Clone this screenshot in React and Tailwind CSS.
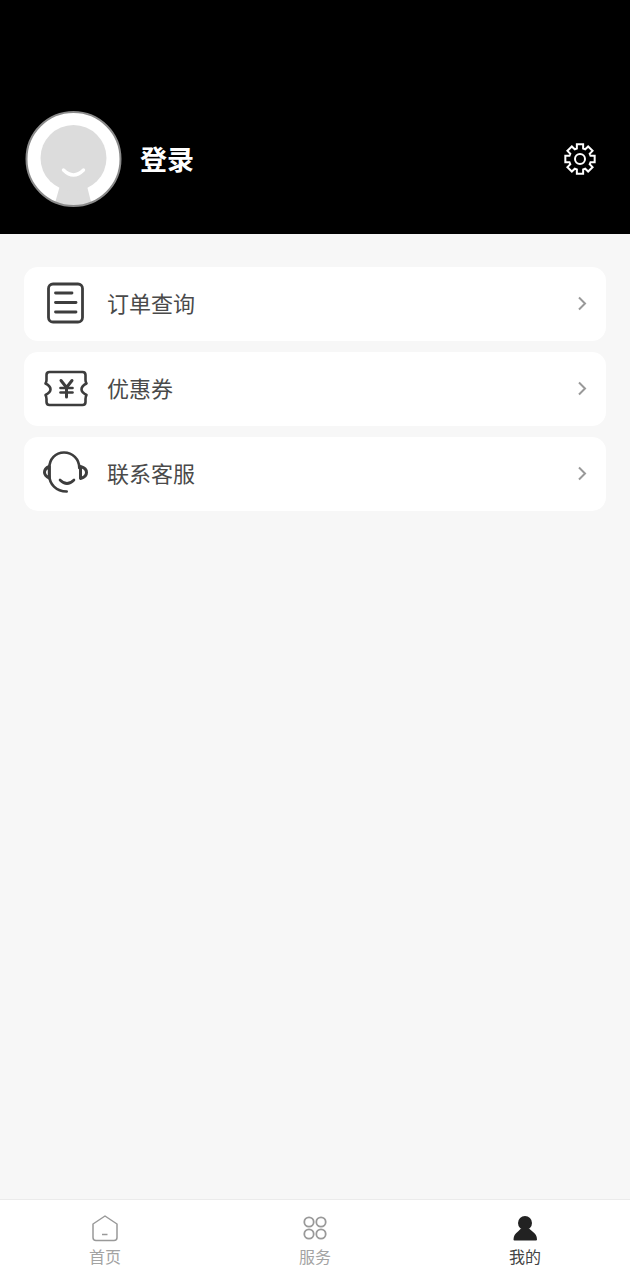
import React from "react";

function Avatar() {
  return (
    <svg width="98" height="98" viewBox="0 0 98 98" className="block shrink-0">
      <defs>
        <clipPath id="av"><circle cx="48.500" cy="49" r="47" /></clipPath>
      </defs>
      <circle cx="48.500" cy="49" r="47" fill="#fff" />
      <g clipPath="url(#av)">
        <path d="M36 72 L61 72 L68 100 L28 100 Z" fill="#dcdcdc" />
      </g>
      <circle cx="48.500" cy="48" r="33" fill="#dcdcdc" />
      <path d="M38.500 60 Q48.500 70 58.500 60" fill="none" stroke="#fff" strokeWidth="3.4" strokeLinecap="round" />
      <circle cx="48.500" cy="49" r="47" fill="none" stroke="#8a8a8a" strokeWidth="2" />
    </svg>
  );
}

function Gear() {
  const n = 8, ro = 15, ri = 11;
  let d = "";
  for (let i = 0; i < n; i++) {
    const a = (i * 2 * Math.PI) / n - Math.PI / 2;
    const pts = [
      [ri, a - 0.29],
      [ro, a - 0.21],
      [ro, a + 0.21],
      [ri, a + 0.29],
    ];
    pts.forEach(([r, t], j) => {
      const x = (16 + r * Math.cos(t)).toFixed(2);
      const y = (16 + r * Math.sin(t)).toFixed(2);
      d += (i === 0 && j === 0 ? "M" : "L") + x + " " + y + " ";
    });
  }
  d += "Z";
  return (
    <svg width="32" height="32" viewBox="0 0 32 32" fill="none" stroke="#fff" strokeWidth="2" strokeLinejoin="miter">
      <path d={d} />
      <circle cx="16" cy="16" r="5" />
    </svg>
  );
}

function OrderIcon() {
  return (
    <svg width="46" height="46" viewBox="0 0 46 46" fill="none" stroke="#3d3d3d" strokeWidth="2.8" strokeLinecap="round">
      <rect x="5.500" y="3" width="34" height="38" rx="4.5" />
      <path d="M12.500 12H29" />
      <path d="M12.500 21.500H33" />
      <path d="M12.500 31H33" />
    </svg>
  );
}

function CouponIcon() {
  return (
    <svg width="46" height="46" viewBox="0 0 46 46" fill="none" stroke="#3d3d3d" strokeWidth="2.6" strokeLinecap="round" strokeLinejoin="round">
      <path d="M7 6H39.500Q42.500 6 42.500 9V14Q42.500 16 43.500 17.500Q38.500 20 38.500 23.300Q38.500 26.500 43.500 29Q42.500 30.500 42.500 33V36Q42.500 39 39.500 39H6.500Q3.500 39 3.500 36V33Q3.500 30.500 2.500 29Q7.500 26.500 7.500 23.300Q7.500 20 2.500 17.500Q3.500 16 3.500 14V9Q3.500 6 6.500 6Z" />
      <path d="M18 14.500L23.500 21.500L29 14.500" strokeWidth="3" />
      <path d="M23.500 21.500V31" strokeWidth="3" />
      <path d="M17.500 22H29.500" />
      <path d="M17.500 26.500H29.500" />
    </svg>
  );
}

function ServiceIcon() {
  return (
    <svg width="46" height="46" viewBox="0 0 46 46" fill="none" stroke="#3d3d3d" strokeWidth="2.6" strokeLinecap="round" strokeLinejoin="round">
      <path d="M36.300 17C36.300 8 29.500 1.500 21 1.500C12.500 1.500 6.300 8 6.300 17V24C6.300 33 13 40.500 23.700 40.500" />
      <path d="M17 29Q24 36 31 29" />
      <path d="M6.300 15.500Q1.500 17.500 1.500 21.300Q1.500 25 6.300 27Z" strokeWidth="3" />
      <path d="M37.500 15.500Q43.500 17 43.500 21.500Q43.500 26 37.500 27.500Z" strokeWidth="3" />
    </svg>
  );
}

function Chevron() {
  return (
    <svg width="12" height="18" viewBox="0 0 12 18" fill="none" stroke="#999" strokeWidth="2">
      <path d="M3 2.500L9 8.500L3 14.500" />
    </svg>
  );
}

function HomeIcon() {
  return (
    <svg width="28" height="28" viewBox="0 0 28 28" fill="none" stroke="#999" strokeWidth="1.5" strokeLinejoin="round">
      <path d="M14 2L26 10V23.500Q26 26.500 23 26.500H5Q2 26.500 2 23.500V10Z" />
      <path d="M11 20.500H16.500" />
    </svg>
  );
}

function ServicesIcon() {
  return (
    <svg width="28" height="28" viewBox="0 0 28 28" fill="none" stroke="#999" strokeWidth="1.8">
      <circle cx="8" cy="8" r="4.700" />
      <circle cx="20" cy="8" r="4.700" />
      <circle cx="8" cy="20" r="4.700" />
      <circle cx="20" cy="20" r="4.700" />
    </svg>
  );
}

function MineIcon() {
  return (
    <svg width="28" height="28" viewBox="0 0 28 28" fill="#222">
      <circle cx="14" cy="9" r="7" />
      <path d="M10 14.500H18L21.500 17.500Q26 20.500 26 25.500Q26 26.500 25 26.500H3.500Q2.500 26.500 2.500 25.500Q2.500 20.500 7 17.500Z" />
    </svg>
  );
}

const rows = [
  { label: "订单查询", Icon: OrderIcon },
  { label: "优惠券", Icon: CouponIcon },
  { label: "联系客服", Icon: ServiceIcon },
];

const tabs = [
  { label: "首页", Icon: HomeIcon, color: "text-[#a3a3a3]" },
  { label: "服务", Icon: ServicesIcon, color: "text-[#a3a3a3]" },
  { label: "我的", Icon: MineIcon, color: "text-[#444444]" },
];

export default function App() {
  return (
    <div className="flex h-[1280px] w-[630px] flex-col overflow-hidden bg-[#f7f7f7] font-['Liberation_Sans','Noto_Sans_CJK_SC',sans-serif]">
      <header className="flex h-[234px] shrink-0 items-start bg-black pl-[25px] pr-[34px] pt-[110px]">
        <Avatar />
        <span className="ml-[17px] mt-[31px] text-[27px] font-bold leading-[40px] text-white">登录</span>
        <span className="ml-auto mt-[33px]"><Gear /></span>
      </header>

      <main className="flex flex-1 flex-col gap-[11px] px-6 pt-[33px]">
        {rows.map(({ label, Icon }) => (
          <div key={label} className="flex h-[74px] items-center rounded-[14px] bg-white pl-[19px] pr-[18px]">
            <Icon />
            <span className="ml-[18px] mt-[2px] text-[22px] leading-[30px] text-[#4a4a4a]">{label}</span>
            <span className="ml-auto flex"><Chevron /></span>
          </div>
        ))}
      </main>

      <nav className="grid h-[81px] shrink-0 grid-cols-3 border-t border-[#ebebeb] bg-white">
        {tabs.map(({ label, Icon, color }) => (
          <div key={label} className="flex flex-col items-center pt-[14px]">
            <Icon />
            <span className={`mt-[5px] text-[16px] leading-[22px] ${color}`}>{label}</span>
          </div>
        ))}
      </nav>
    </div>
  );
}
